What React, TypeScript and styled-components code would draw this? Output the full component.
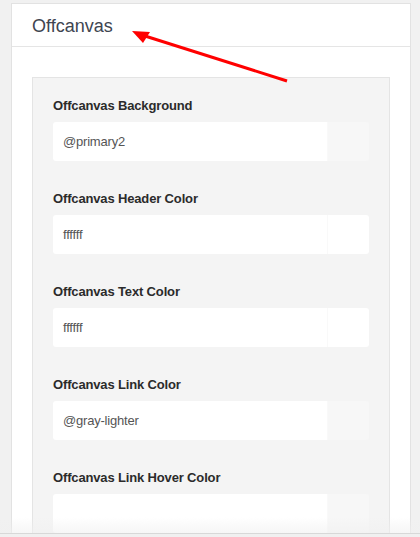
import React from "react";
import styled, { createGlobalStyle } from "styled-components";

const Global = createGlobalStyle`
  html, body { margin: 0; padding: 0; background: #f1f1f1; overflow: hidden; }
  body { font-family: "Liberation Sans", Arial, sans-serif; }
`;

const Page = styled.div`
  position: relative;
  width: 420px;
  height: 537px;
  overflow: hidden;
  padding: 3px 0 0 11px;
  box-sizing: border-box;
`;

const Card = styled.div`
  width: 400px;
  background: #fff;
  border: 1px solid #e2e2e2;
  box-sizing: border-box;
`;

const Header = styled.div`
  height: 43px;
  box-sizing: border-box;
  border-bottom: 1px solid #e5e5e5;
  padding: 11px 0 0 20px;
`;

const Title = styled.h3`
  margin: 0;
  font-size: 18px;
  font-weight: normal;
  line-height: 22px;
  color: #3e4550;
`;

const Body = styled.div`
  padding: 30px 20px 0 20px;
`;

const Panel = styled.div`
  background: #f4f4f4;
  border: 1px solid #e4e4e4;
  padding: 19px 20px 20px 20px;
  display: flex;
  flex-direction: column;
  gap: 29px;
`;

const Field = styled.div`
  display: flex;
  flex-direction: column;
  gap: 7px;
`;

const Label = styled.label`
  font-size: 13px;
  font-weight: bold;
  line-height: 18px;
  color: #2b2b2b;
  letter-spacing: -0.15px;
`;

const InputGroup = styled.div`
  display: flex;
  height: 39px;
  border-radius: 3px;
  overflow: hidden;
`;

const Input = styled.div`
  flex: 1;
  background: #fff;
  padding-left: 10px;
  display: flex;
  align-items: center;
  font-size: 13px;
  color: #555;
  letter-spacing: -0.2px;
`;

const Swatch = styled.div<{ $color: string }>`
  width: 41px;
  background: ${(p) => p.$color};
  border-left: 1px solid #f9f9f9;
`;

const Arrow = styled.svg`
  position: absolute;
  left: 0;
  top: 0;
  pointer-events: none;
`;

const Fade = styled.div`
  position: absolute;
  left: 0;
  right: 0;
  bottom: 3px;
  height: 16px;
  background: linear-gradient(to bottom, rgba(255,255,255,0), rgba(240,240,240,0.6));
  border-bottom: 1px solid #d8d8d8;
`;

const BottomStrip = styled.div`
  position: absolute;
  left: 0;
  right: 0;
  bottom: 0;
  height: 3px;
  background: #f0f0f0;
`;

const fields = [
  { label: "Offcanvas Background", value: "@primary2", swatch: "#f7f7f7" },
  { label: "Offcanvas Header Color", value: "ffffff", swatch: "#ffffff" },
  { label: "Offcanvas Text Color", value: "ffffff", swatch: "#ffffff" },
  { label: "Offcanvas Link Color", value: "@gray-lighter", swatch: "#f7f7f7" },
  { label: "Offcanvas Link Hover Color", value: "", swatch: "#f7f7f7" },
];

export default function App() {
  return (
    <>
      <Global />
      <Page>
        <Card>
          <Header>
            <Title>Offcanvas</Title>
          </Header>
          <Body>
            <Panel>
              {fields.map((f) => (
                <Field key={f.label}>
                  <Label>{f.label}</Label>
                  <InputGroup>
                    <Input>{f.value}</Input>
                    <Swatch $color={f.swatch} />
                  </InputGroup>
                </Field>
              ))}
            </Panel>
          </Body>
        </Card>
        <Fade />
        <BottomStrip />
        <Arrow width="420" height="537" viewBox="0 0 420 537">
          <line x1="287" y1="81" x2="145" y2="36" stroke="#f00" strokeWidth="3" />
          <polygon points="132,31 150,32 143,43" fill="#f00" />
        </Arrow>
      </Page>
    </>
  );
}
